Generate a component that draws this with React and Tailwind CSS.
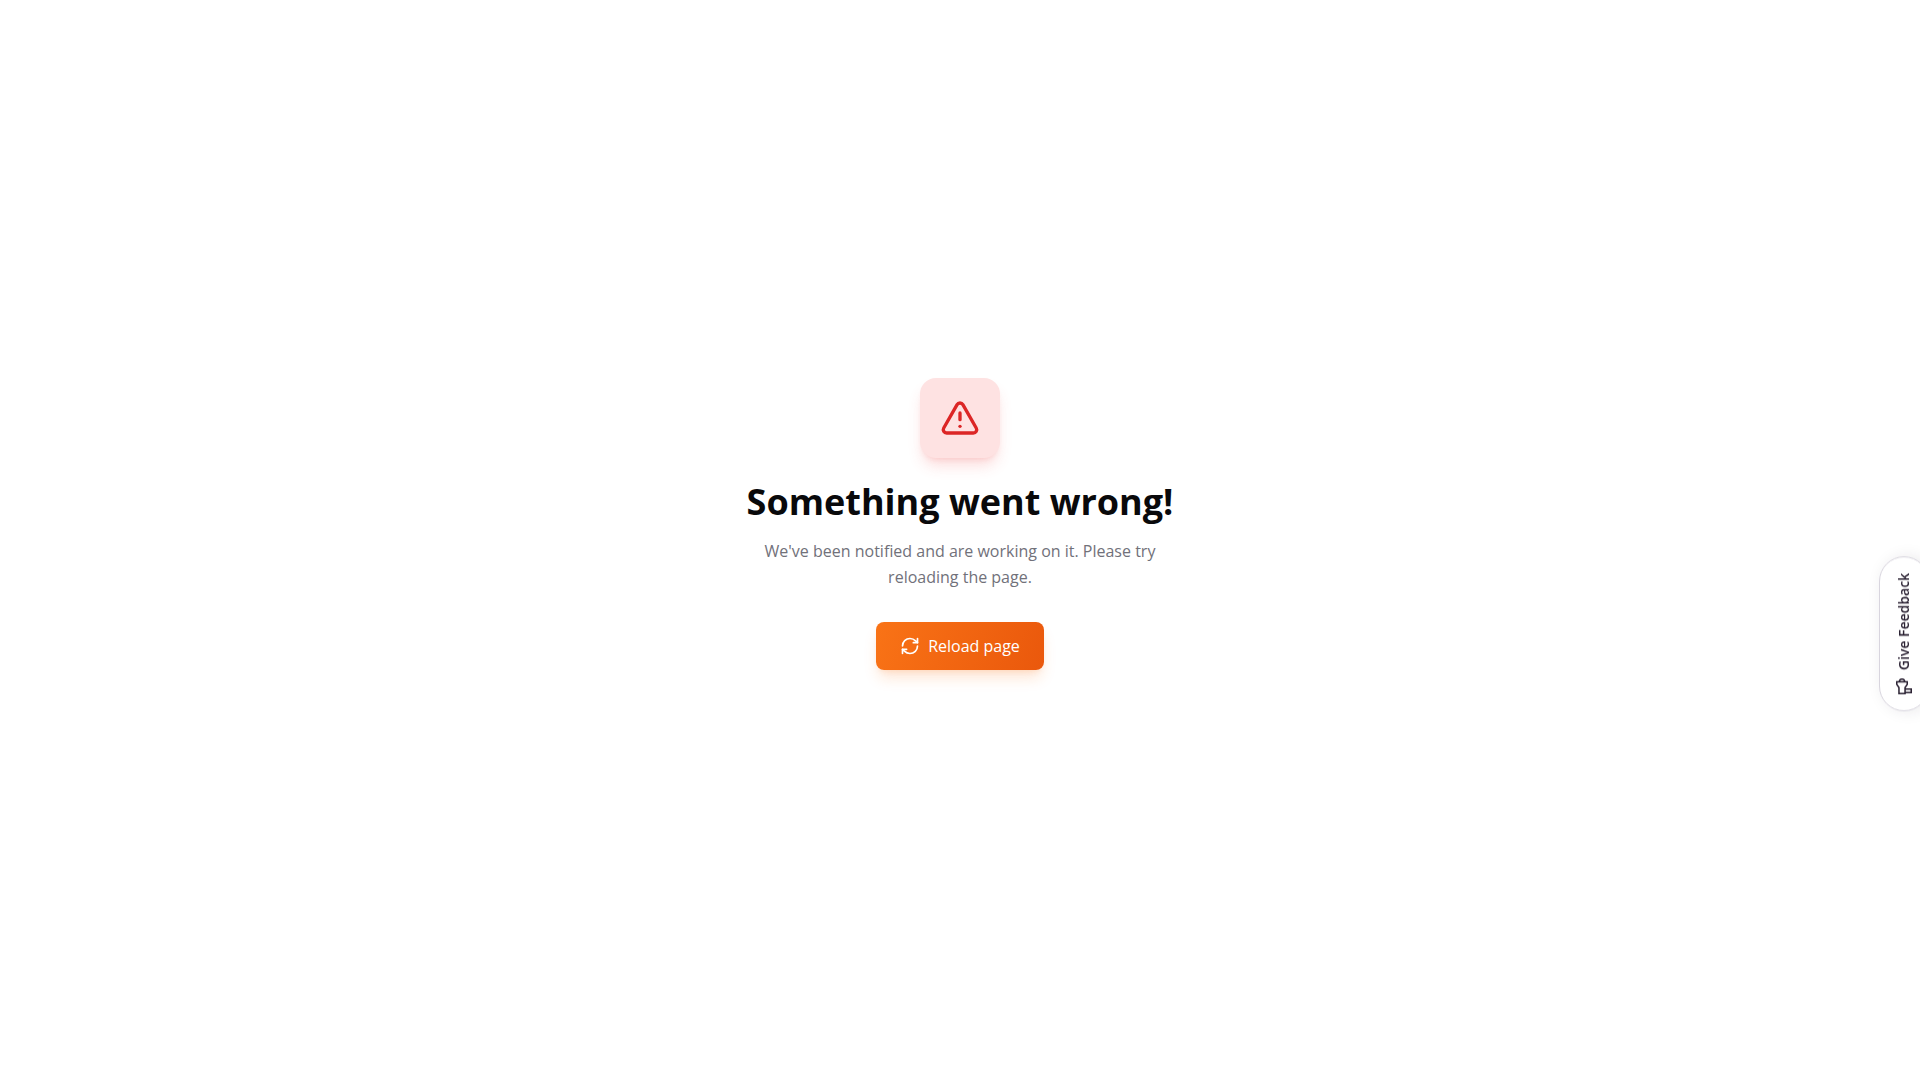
import { RefreshCw, TriangleAlert } from "lucide-react";

const MegaphoneIcon = () => (
  <svg
    className="h-4 w-4 rotate-90"
    viewBox="0 0 20 20"
    fill="none"
    stroke="currentColor"
    strokeWidth="1.9"
    aria-hidden="true"
  >
    <path d="M.95 3.700h7.400l4-2.750h3.300v13.100h-3.300l-4-2.750H.95z" />
    <path d="M2.050 11.300v7.750h4.500V11.300" />
    <path d="M15.650 4.100c1.900.3 3.350 1.600 3.350 3.400s-1.450 3.100-3.350 3.400" />
  </svg>
);

const FeedbackButton = () => {
  return (
    <button
      type="button"
      className="fixed top-[556px] -right-[9px] flex w-[50px] rotate-180 items-center justify-center gap-2 rounded-full border border-[#d8d5de] bg-white pt-4 pb-4 text-sm font-semibold text-[#2b2233] shadow-[-4px_0_16px_rgba(43,34,51,0.1)] [writing-mode:vertical-rl]"
    >
      <MegaphoneIcon />
      <span>Give Feedback</span>
    </button>
  );
};

const App = () => {
  return (
    <div className="min-h-screen bg-white font-['Open_Sans',sans-serif]">
      <main className="flex min-h-screen flex-col items-center justify-center px-4 pb-8 text-center">
        <div className="flex h-20 w-20 items-center justify-center rounded-2xl bg-[#fee2e2] shadow-lg shadow-[#ef4444]/20">
          <TriangleAlert className="h-10 w-10 text-[#dc2626]" />
        </div>
        <h1 className="mt-6 text-4xl font-bold text-[#09090b]">Something went wrong!</h1>
        <p className="mt-4 max-w-md text-base leading-[26px] text-[#71717a]">
          We've been notified and are working on it. Please try reloading the page.
        </p>
        <button
          type="button"
          onClick={() => window.location.reload()}
          className="mt-8 flex h-12 items-center gap-2 rounded-lg bg-[linear-gradient(110deg,#f97316,#ea580c)] px-6 text-base text-white shadow-lg shadow-[#f97316]/20"
        >
          <RefreshCw className="h-5 w-5" />
          Reload page
        </button>
      </main>
      <FeedbackButton />
    </div>
  );
};

export default App;
